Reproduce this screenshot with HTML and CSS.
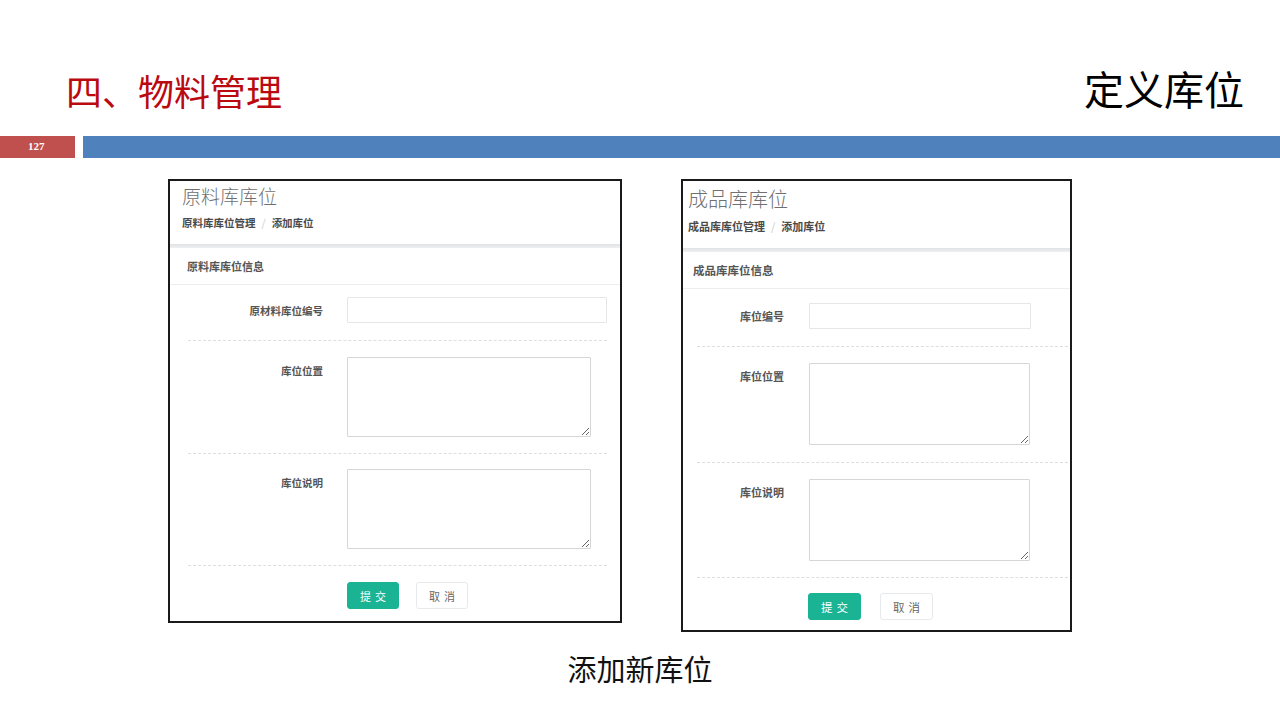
FILE: index.html
```html
<!DOCTYPE html>
<html>
  <head>
    <meta charset="utf-8">
    <link rel="stylesheet" href="styles.css">
  </head>
  <body>
    <div class="slide">
      <div class="header">
        <h1 class="title">四、物料管理</h1>
        <div class="topic">定义库位</div>
      </div>

      <div class="bar">
        <div class="page-no">127</div>
        <div class="bar-line"></div>
      </div>

      <div class="panels">
        <div class="panel panel-raw">
          <div class="page-heading">
            <h2>原料库库位</h2>
            <div class="crumbs">
              <span>原料库库位管理</span><span class="sep">/</span><span>添加库位</span>
            </div>
          </div>
          <div class="band"></div>
          <div class="ibox-title">原料库库位信息</div>
          <div class="ibox-content">
            <div class="form-row">
              <label>原材料库位编号</label>
              <input type="text">
            </div>
            <div class="sep-line"></div>
            <div class="form-row">
              <label>库位位置</label>
              <textarea></textarea>
            </div>
            <div class="sep-line mid"></div>
            <div class="form-row">
              <label>库位说明</label>
              <textarea></textarea>
            </div>
            <div class="sep-line end"></div>
            <div class="form-row">
              <span></span>
              <div class="actions">
                <button class="btn btn-primary">提交</button>
                <button class="btn btn-white">取消</button>
              </div>
            </div>
          </div>
        </div>

        <div class="panel panel-product">
          <div class="page-heading">
            <h2>成品库库位</h2>
            <div class="crumbs">
              <span>成品库库位管理</span><span class="sep">/</span><span>添加库位</span>
            </div>
          </div>
          <div class="band"></div>
          <div class="ibox-title">成品库库位信息</div>
          <div class="ibox-content">
            <div class="form-row">
              <label>库位编号</label>
              <input type="text">
            </div>
            <div class="sep-line"></div>
            <div class="form-row">
              <label>库位位置</label>
              <textarea></textarea>
            </div>
            <div class="sep-line mid"></div>
            <div class="form-row">
              <label>库位说明</label>
              <textarea></textarea>
            </div>
            <div class="sep-line end"></div>
            <div class="form-row">
              <span></span>
              <div class="actions">
                <button class="btn btn-primary">提交</button>
                <button class="btn btn-white">取消</button>
              </div>
            </div>
          </div>
        </div>
      </div>

      <div class="caption">添加新库位</div>
    </div>
  </body>
</html>
```

FILE: styles.css
```css
body {
  margin: 0;
  background: #ffffff;
  font-family: "Noto Sans CJK SC", "Noto Sans", sans-serif;
}

.slide {
  width: 1280px;
  height: 720px;
  overflow: hidden;
}

/* slide header */

.header {
  display: flex;
  justify-content: space-between;
  align-items: flex-end;
  padding: 68px 36px 0 66px;
}

.title {
  margin: 0;
  font-size: 36px;
  line-height: 36px;
  font-weight: normal;
  color: #bb0a0f;
}

.topic {
  font-size: 40px;
  line-height: 40px;
  color: #000000;
}

.bar {
  display: flex;
  gap: 8px;
  height: 22px;
  margin-top: 28px;
}

.page-no {
  width: 75px;
  box-sizing: border-box;
  padding-left: 28px;
  background-color: #c0504d;
  color: #ffffff;
  font: bold 11px/21px "Liberation Serif", serif;
}

.bar-line {
  flex: 1;
  background-color: #4f81bd;
}

/* screenshots */

.panels {
  display: flex;
  align-items: flex-start;
  gap: 59px;
  margin-top: 21px;
  padding-left: 168px;
}

.panel {
  box-sizing: border-box;
  border: 2px solid #1a1a1a;
  background: #ffffff;
}

.page-heading h2 {
  margin: 0;
  font-weight: 300;
  color: #707070;
}

.crumbs {
  font-weight: bold;
  color: #4a4a4a;
}

.crumbs .sep {
  padding: 0 6px;
  font-weight: normal;
  color: #cccccc;
}

.band {
  height: 4px;
  background: linear-gradient(#e0e2e4, #eef0f1);
}

.ibox-title {
  border-bottom: 1px solid #eeeeee;
  font-weight: bold;
  color: #555555;
}

.form-row {
  display: grid;
  align-items: start;
}

.form-row label {
  padding-top: 8px;
  text-align: right;
  font-weight: bold;
  color: #555555;
}

.form-row input {
  display: block;
  box-sizing: border-box;
  height: 26px;
  margin: 0;
  border: 1px solid #e5e6e7;
  border-radius: 1px;
  outline: none;
}

.form-row textarea {
  display: block;
  box-sizing: border-box;
  margin: 0;
  border: 1px solid #d6d6d6;
  border-radius: 1px;
  outline: none;
}

.sep-line {
  border-top: 1px dashed #dedede;
  margin: 17px 0 16px;
}

.actions {
  display: flex;
}

.btn {
  box-sizing: border-box;
  height: 27px;
  margin: 0;
  padding: 0 0 0 4px;
  border-radius: 3px;
  font-family: "Noto Sans CJK SC", "Noto Sans", sans-serif;
  letter-spacing: 4px;
}

.btn-primary {
  border: 1px solid #1ab394;
  background-color: #1ab394;
  color: #ffffff;
}

.btn-white {
  border: 1px solid #e7eaec;
  background-color: #ffffff;
  color: #666666;
}

/* left panel */

.panel-raw {
  width: 454px;
}

.panel-raw .page-heading {
  padding: 5px 13px 16px 12px;
}

.panel-raw h2 {
  font-size: 19px;
  line-height: 19px;
}

.panel-raw .crumbs {
  margin-top: 12px;
  font-size: 10.5px;
  line-height: 11px;
}

.panel-raw .ibox-title {
  height: 36px;
  padding-left: 17px;
  font-size: 11px;
  line-height: 36px;
}

.panel-raw .ibox-content {
  padding: 12px 13px 12px 18px;
}

.panel-raw .sep-line.mid {
  margin: 16px 0 15px;
}

.panel-raw .sep-line.end {
  margin: 16px 0 16px;
}

.panel-raw .form-row {
  grid-template-columns: 135px 1fr;
  column-gap: 24px;
}

.panel-raw label {
  font-size: 10.5px;
  line-height: 11px;
}

.panel-raw input {
  width: 260px;
}

.panel-raw textarea {
  width: 244px;
  height: 80px;
}

.panel-raw .btn {
  width: 52px;
  font-size: 11px;
}

.panel-raw .actions {
  gap: 17px;
}

/* right panel */

.panel-product {
  width: 391px;
}

.panel-product .page-heading {
  padding: 8px 6px 16px 5px;
}

.panel-product h2 {
  font-size: 20px;
  line-height: 20px;
}

.panel-product .crumbs {
  margin-top: 12px;
  font-size: 11px;
  line-height: 11px;
}

.panel-product .ibox-title {
  height: 36px;
  padding-left: 10px;
  font-size: 11.5px;
  line-height: 36px;
}

.panel-product .ibox-content {
  padding: 14px 2px 10px 14px;
}

.panel-product .sep-line.end {
  margin: 16px 0 15px;
}

.panel-product .form-row {
  grid-template-columns: 87px 1fr;
  column-gap: 25px;
}

.panel-product label {
  font-size: 11px;
  line-height: 11px;
}

.panel-product input {
  width: 222px;
}

.panel-product textarea {
  width: 221px;
  height: 82px;
}

.panel-product .btn {
  width: 53px;
  font-size: 11.5px;
}

.panel-product .actions {
  gap: 19px;
  margin-left: -1px;
}

.caption {
  margin-top: 22px;
  text-align: center;
  font-size: 29px;
  line-height: 29px;
  color: #111111;
}
```
